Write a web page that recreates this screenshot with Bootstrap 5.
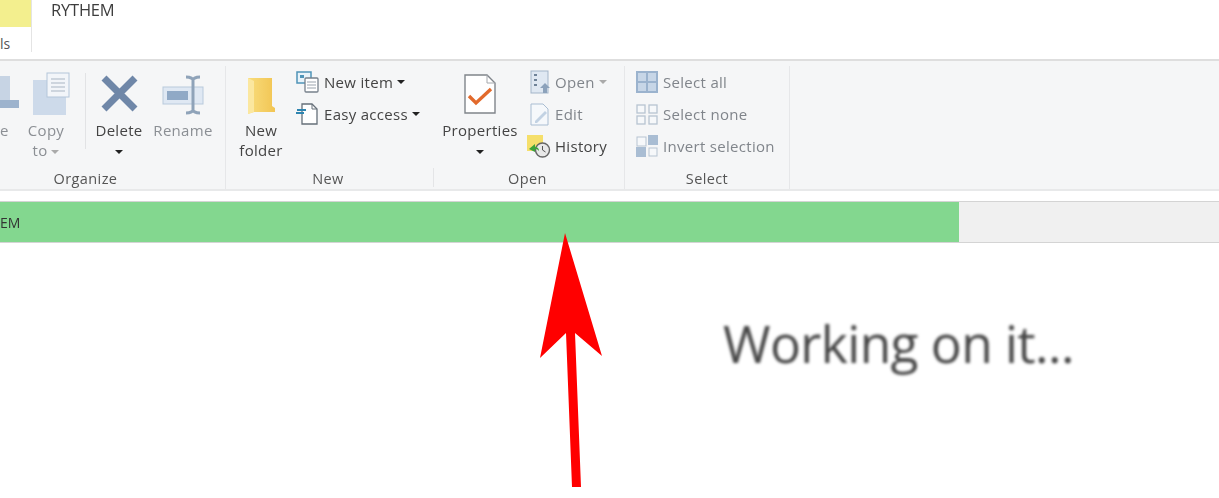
<!DOCTYPE html>
<html lang="en">
<head>
<meta charset="utf-8">
<title>Working on it</title>
<link href="https://cdn.jsdelivr.net/npm/bootstrap@5.3.0/dist/css/bootstrap.min.css" rel="stylesheet">
<style>
html,body{height:498px;overflow:hidden;background:#fff}
body{font-family:"Open Sans","Noto Sans",sans-serif;color:#444;position:relative}
.title-row{height:60px}
.tab-stub{width:32px;height:52px;border-right:1px solid #e4e4e4}
.tab-yellow{height:27px;background:#f3ef8e}
.tab-text{font-size:14px;line-height:34px;color:#555;height:25px;overflow:hidden}
.path-title{font-size:16.5px;line-height:20px;margin:0 0 0 19px;color:#3d3d3d;letter-spacing:-.2px;filter:blur(.4px)}
.ribbon{height:132px;margin-top:-1px;background:#f5f6f7;border-top:2px solid #dedede;border-bottom:2px solid #e8e9ea;padding-top:5px;overflow:hidden;filter:blur(.5px)}
.rgroup{flex:none;display:flex;flex-direction:column;border-right:1px solid #e6e7e9}
.rgroup-quiet{border-right:0;position:relative}
.rgroup-quiet::after{content:"";position:absolute;right:0;top:102px;height:19px;border-right:1px solid #e4e5e7}
.g-org{width:226px}.g-new{width:208px}.g-open{width:191px}.g-sel{width:165px}
.g-body{height:103px;display:flex}
.g-label{height:20px;font-size:14.5px;line-height:20px;text-align:center;color:#555;letter-spacing:.4px}
.g-org .g-label{padding-right:54px}
.g-new .g-label{padding-right:4px}
.g-open .g-label{padding-right:3px}
.bigtool{flex:none;text-align:center;font-size:15px;line-height:20px;color:#444;padding-top:6px;letter-spacing:.3px;white-space:nowrap}
.bigtool svg{display:block;margin:0 auto 4px;height:44px}
.tool-move{width:60px;margin-left:-41px}
.tool-copy{width:60px;margin-left:-3px}
.tool-copy svg{transform:translateX(5px)}
.tool-delete,.tool-rename{width:64px}
.tool-folder{width:70px}
.tool-props{width:78px;margin-left:7px}
.off{color:#8b8f94}
.vsep{width:1px;height:76px;background:#e2e3e5;margin:7px 1px 0 9px;flex:none}
.tiny-caret{display:inline-block;border:4px solid transparent;border-top:4.5px solid #222;border-bottom:0;vertical-align:middle;margin-left:4px}
.caret-off{border-top-color:#aaa}
.stack{display:flex;flex-direction:column}
.stack-open{margin-left:8px}
.stack-sel{margin-left:10px}
.smalltool{height:32px;display:flex;align-items:center;font-size:15px;letter-spacing:.3px;white-space:nowrap;color:#444}
.smalltool svg{flex:none;width:24px;height:24px;margin-right:4px}
.smalltool.off{color:#80858b}
.bar-shell{height:42px;margin-top:10px;background:#f0f0f0;border-top:1px solid #d4d4d4;border-bottom:1px solid #d4d4d4;border-radius:0}
.bar-fill{background:#83d78f;color:#333;font-size:14px;text-align:left;line-height:37px;overflow:hidden;filter:blur(.4px)}
.busy{font-size:51.5px;line-height:68px;margin:66px 0 0 723px;color:#454545;filter:blur(1.4px);white-space:nowrap;letter-spacing:-.6px}
.pointer{position:absolute;left:0;top:0;pointer-events:none}
</style>
</head>
<body>
<div class="title-row d-flex">
  <div class="tab-stub">
    <div class="tab-yellow"></div>
    <div class="tab-text">ls</div>
  </div>
  <p class="path-title">RYTHEM</p>
</div>

<div class="ribbon d-flex">
  <div class="rgroup g-org">
    <div class="g-body">
      <div class="bigtool off tool-move">
        <svg width="60" height="44" viewBox="0 0 60 44"><rect x="32" y="4" width="19" height="24" fill="#c7d4e4"/><rect x="26" y="28" width="34" height="8" fill="#9db3cd"/></svg>
        Move<br>to
      </div>
      <div class="bigtool off tool-copy">
        <svg width="40" height="44" viewBox="0 0 40 44"><rect x="2" y="8" width="33" height="35" fill="#cddaea"/><rect x="16" y="1" width="22" height="24" fill="#f2f5f9" stroke="#b4c5d9"/><path d="M20 7h14M20 11h14M20 15h14M20 19h14" stroke="#a9b5c3"/></svg>
        Copy<br>to<span class="tiny-caret caret-off"></span>
      </div>
      <div class="vsep"></div>
      <div class="bigtool tool-delete">
        <svg width="40" height="44" viewBox="0 0 40 44"><path d="M5 6 36 37M36 6 5 37" stroke="#6f87a8" stroke-width="7"/></svg>
        Delete<br><span class="tiny-caret m-0"></span>
      </div>
      <div class="bigtool off tool-rename">
        <svg width="44" height="44" viewBox="0 0 44 44"><rect x="2" y="15" width="40" height="17" fill="#dfe8f3" stroke="#b9cadc"/><rect x="6" y="19" width="21" height="9" fill="#90a9c6"/><path d="M25 5c5 0 7 2 7 3 0-1 2-3 7-3M32 8v30M25 41c5 0 7-2 7-3 0 1 2 3 7 3" fill="none" stroke="#8fa3b9" stroke-width="3"/></svg>
        Rename
      </div>
    </div>
    <div class="g-label">Organize</div>
  </div>

  <div class="rgroup g-new rgroup-quiet">
    <div class="g-body">
      <div class="bigtool tool-folder">
        <svg width="30" height="44" viewBox="0 0 30 44"><defs><linearGradient id="fold" x1="0" x2="1"><stop offset="0" stop-color="#f8dc7c"/><stop offset="1" stop-color="#f2c553"/></linearGradient></defs><path d="M2 6h24v28l3 2v4H8l-6 2z" fill="url(#fold)"/><path d="M2 6l6 3v31l-6 2z" fill="#fbe79f"/></svg>
        New<br>folder
      </div>
      <div class="stack">
        <div class="smalltool"><svg viewBox="0 0 24 24"><rect x="1" y="2" width="14" height="11" fill="#e8f3fa" stroke="#4f94b8" stroke-width="1.5"/><rect x="4" y="5" width="4" height="3" fill="#4f94b8"/><rect x="9" y="8" width="13" height="14" rx="1" fill="#fff" stroke="#77818c" stroke-width="1.3"/><path d="M11 12h9M11 15h9M11 18h9" stroke="#9aa3ad"/></svg>New item<span class="tiny-caret ms-1"></span></div>
        <div class="smalltool"><svg viewBox="0 0 24 24"><path d="M6 2h10l5 5v15H6z" fill="#fff" stroke="#66707a" stroke-width="1.3"/><path d="M16 2v5h5" fill="none" stroke="#66707a"/><path d="M1 8h9M0 11h8" stroke="#2f85b0" stroke-width="1.8"/></svg>Easy access<span class="tiny-caret ms-1"></span></div>
      </div>
    </div>
    <div class="g-label">New</div>
  </div>

  <div class="rgroup g-open">
    <div class="g-body">
      <div class="bigtool tool-props">
        <svg width="34" height="44" viewBox="0 0 34 44"><path d="M2 3h22l8 8v30H2z" fill="#fff" stroke="#80858b" stroke-width="1.4"/><path d="M24 3v8h8" fill="none" stroke="#a4a8ad"/><path d="M6 24l7 7 15-14" fill="none" stroke="#e26a2c" stroke-width="3.4"/></svg>
        Properties<br><span class="tiny-caret m-0"></span>
      </div>
      <div class="stack stack-open">
        <div class="smalltool off"><svg viewBox="0 0 24 24"><rect x="4" y="1" width="17" height="22" fill="#dfe8f2" stroke="#a3b5c9"/><path d="M7 5h3M7 10h3M7 15h3" stroke="#6f8398" stroke-width="2"/><path d="M18 13l5 5h-3v5h-4v-5h-3z" fill="#8ca2bb"/></svg>Open<span class="tiny-caret caret-off ms-1"></span></div>
        <div class="smalltool off"><svg viewBox="0 0 24 24"><path d="M4 2h12l5 5v16H4z" fill="#f5f8fb" stroke="#a9bdd2"/><path d="M8 19 18 9l2 2-10 10H8z" fill="#c2d2e3"/></svg>Edit</div>
        <div class="smalltool"><svg viewBox="0 0 24 24"><rect x="0" y="1" width="16" height="16" fill="#f5df6b"/><circle cx="15.5" cy="16" r="7" fill="#e8e8e8" stroke="#666" stroke-width="1.4"/><path d="M15.5 12v4l3 2" fill="none" stroke="#555"/><path d="M2 15l6-5v3c3 0 4 2 4 4-2-2-3-2-4-2v3z" fill="#3ca33a"/></svg>History</div>
      </div>
    </div>
    <div class="g-label">Open</div>
  </div>

  <div class="rgroup g-sel">
    <div class="g-body">
      <div class="stack stack-sel">
        <div class="smalltool off"><svg viewBox="0 0 24 24"><rect x="1" y="1" width="22" height="22" fill="#9bb3ce"/><rect x="3" y="3" width="8" height="8" fill="#c7d6e7"/><rect x="13" y="3" width="8" height="8" fill="#c7d6e7"/><rect x="3" y="13" width="8" height="8" fill="#c7d6e7"/><rect x="13" y="13" width="8" height="8" fill="#c7d6e7"/></svg>Select all</div>
        <div class="smalltool off"><svg viewBox="0 0 24 24"><g fill="#f6f8fa" stroke="#b7c4d2" stroke-width="1.3"><rect x="2" y="3" width="8" height="8"/><rect x="14" y="3" width="8" height="8"/><rect x="2" y="14" width="8" height="8"/><rect x="14" y="14" width="8" height="8"/></g></svg>Select none</div>
        <div class="smalltool off"><svg viewBox="0 0 24 24"><rect x="2" y="3" width="9" height="9" fill="#f6f8fa" stroke="#b7c4d2"/><rect x="13" y="1" width="10" height="10" fill="#a9bdd3"/><rect x="1" y="13" width="10" height="10" fill="#a9bdd3"/><rect x="14" y="14" width="8" height="8" fill="#f6f8fa" stroke="#b7c4d2"/></svg>Invert selection</div>
      </div>
    </div>
    <div class="g-label">Select</div>
  </div>
</div>

<div class="progress bar-shell">
  <div class="progress-bar bar-fill" role="progressbar" style="width:78.67%" aria-valuenow="79" aria-valuemin="0" aria-valuemax="100">EM</div>
</div>

<div class="busy">Working on it...</div>

<svg class="pointer" width="1219" height="498" viewBox="0 0 1219 498" aria-hidden="true">
  <polygon points="565,233 602,356 575,333 581,487 572,487 566,333 540,358" fill="#ff0000"/>
</svg>
</body>
</html>
